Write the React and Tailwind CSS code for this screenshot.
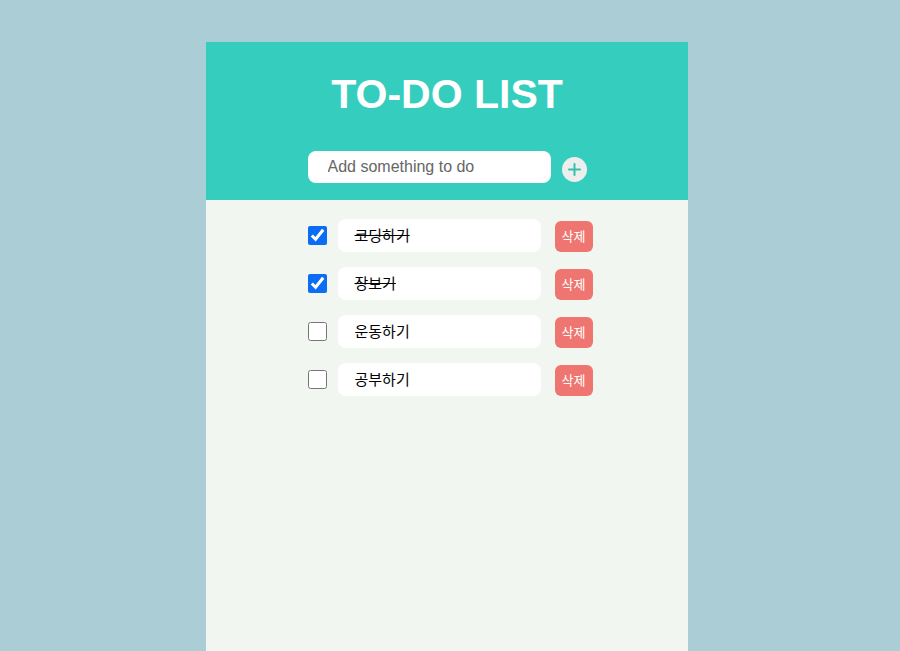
import React, { useState } from 'react';

const initialTodos = [
    { id: 1, text: '코딩하기', done: true },
    { id: 2, text: '장보기', done: true },
    { id: 3, text: '운동하기', done: false },
    { id: 4, text: '공부하기', done: false },
];

const TodoItem = ({ todo, onToggle, onDelete }) => (
    <li className="flex items-center">
        <input
            type="checkbox"
            checked={todo.done}
            onChange={() => onToggle(todo.id)}
            className="w-[19px] h-[19px] accent-[#0b6cf4] shrink-0"
        />
        <div className="ml-[11px] w-[203px] h-[33px] bg-white rounded-lg flex items-center pl-[17px]">
            <span
                className={`text-[15px] text-black ${todo.done ? 'line-through' : ''}`}
                style={{ fontFamily: '"Noto Sans CJK KR", "Noto Sans", sans-serif' }}
            >
                {todo.text}
            </span>
        </div>
        <button
            onClick={() => onDelete(todo.id)}
            className="ml-[14px] mt-[1px] w-[38px] h-[31px] bg-[#ef7670] rounded-md text-white text-[13px]"
            style={{ fontFamily: '"Noto Sans CJK KR", sans-serif' }}
        >
            삭제
        </button>
    </li>
);

const App = () => {
    const [todos, setTodos] = useState(initialTodos);
    const [value, setValue] = useState('');

    const toggle = (id) => setTodos(todos.map(t => (t.id === id ? { ...t, done: !t.done } : t)));
    const remove = (id) => setTodos(todos.filter(t => t.id !== id));
    const add = () => {
        if (!value.trim()) return;
        setTodos([...todos, { id: Date.now(), text: value, done: false }]);
        setValue('');
    };

    return (
        <div
            className="min-h-screen bg-[#abcdd5] pt-[42px] pr-[6px] flex justify-center"
            style={{ fontFamily: '"Liberation Sans", Arial, sans-serif' }}
        >
            <div className="w-[482px] h-[609px] bg-[#f1f6f1] flex flex-col">
                {/* Header */}
                <div className="h-[158px] bg-[#35cebe] pt-[28px] flex flex-col items-center">
                    <h1 className="text-[41px] leading-[48px] font-bold text-white">TO-DO LIST</h1>
                    <div className="mt-[33px] flex items-center">
                        <input
                            value={value}
                            onChange={(e) => setValue(e.target.value)}
                            placeholder="Add something to do"
                            className="w-[243px] h-[32px] bg-white rounded-lg pl-[20px] text-[16px] text-[#444] placeholder:text-[#666] outline-none"
                        />
                        <button
                            onClick={add}
                            className="ml-[11px] mt-[4px] w-[25px] h-[25px] rounded-full bg-[#eeeeee] flex items-center justify-center"
                        >
                            <svg width="13" height="13" viewBox="0 0 13 13">
                                <path d="M6.5 1v11M1 6.5h11" stroke="#35bfae" strokeWidth="2" strokeLinecap="round" />
                            </svg>
                        </button>
                    </div>
                </div>

                {/* List */}
                <ul className="pt-[19px] w-[285px] mx-auto flex flex-col gap-[15px] translate-x-[3px]">
                    {todos.map(todo => (
                        <TodoItem key={todo.id} todo={todo} onToggle={toggle} onDelete={remove} />
                    ))}
                </ul>
            </div>
        </div>
    );
};

export default App;
